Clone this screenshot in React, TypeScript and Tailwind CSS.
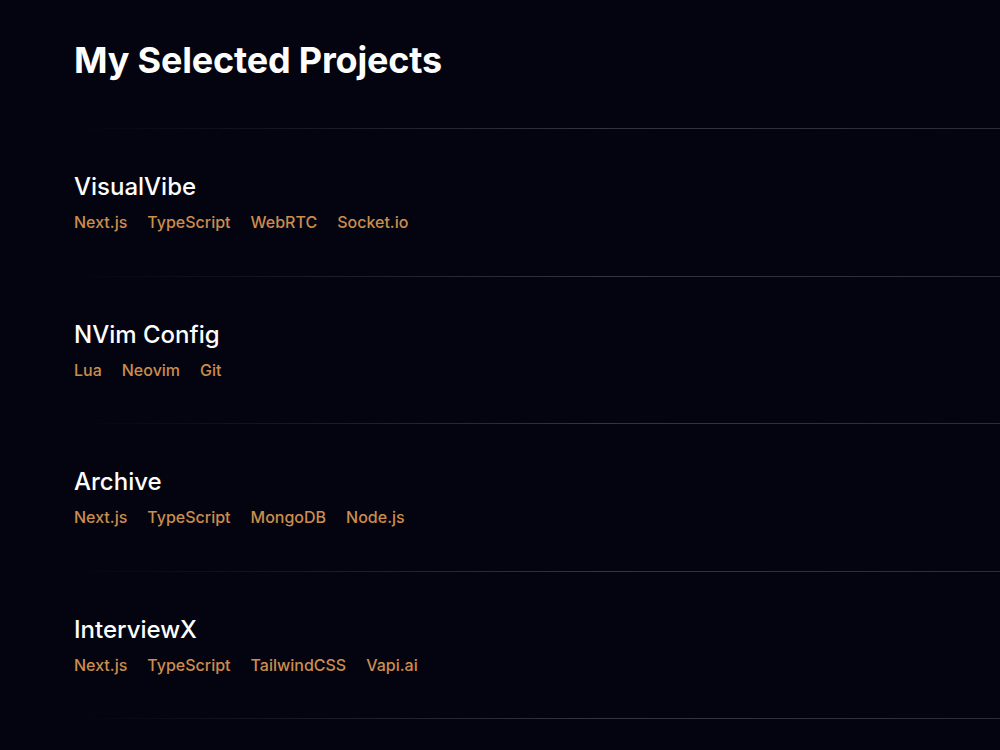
const projects = [
  { name: "VisualVibe", stack: ["Next.js", "TypeScript", "WebRTC", "Socket.io"] },
  { name: "NVim Config", stack: ["Lua", "Neovim", "Git"] },
  { name: "Archive", stack: ["Next.js", "TypeScript", "MongoDB", "Node.js"] },
  { name: "InterviewX", stack: ["Next.js", "TypeScript", "TailwindCSS", "Vapi.ai"] },
];

function Divider() {
  return <div className="h-px w-full bg-gradient-to-r from-transparent from-[8%] via-[#34343f] via-[60%] to-[#2c2c36]" />;
}

export default function App() {
  return (
    <div className="min-h-screen bg-[#03040f] font-['Inter',sans-serif] text-white">
      <h1 className="px-[74px] pt-10 text-4xl leading-10 font-bold tracking-[-0.005em]">My Selected Projects</h1>
      <div className="mt-12">
        {projects.map((p) => (
          <section key={p.name}>
            <Divider />
            <div className="px-[74px] pt-[42px] pb-[41.5px]">
              <h2 className="text-2xl leading-8 font-medium">{p.name}</h2>
              <ul className="mt-[7px] flex gap-5 text-base leading-6 font-medium text-[#cc8d4e]">
                {p.stack.map((t) => (
                  <li key={t}>{t}</li>
                ))}
              </ul>
            </div>
          </section>
        ))}
        <Divider />
      </div>
    </div>
  );
}
